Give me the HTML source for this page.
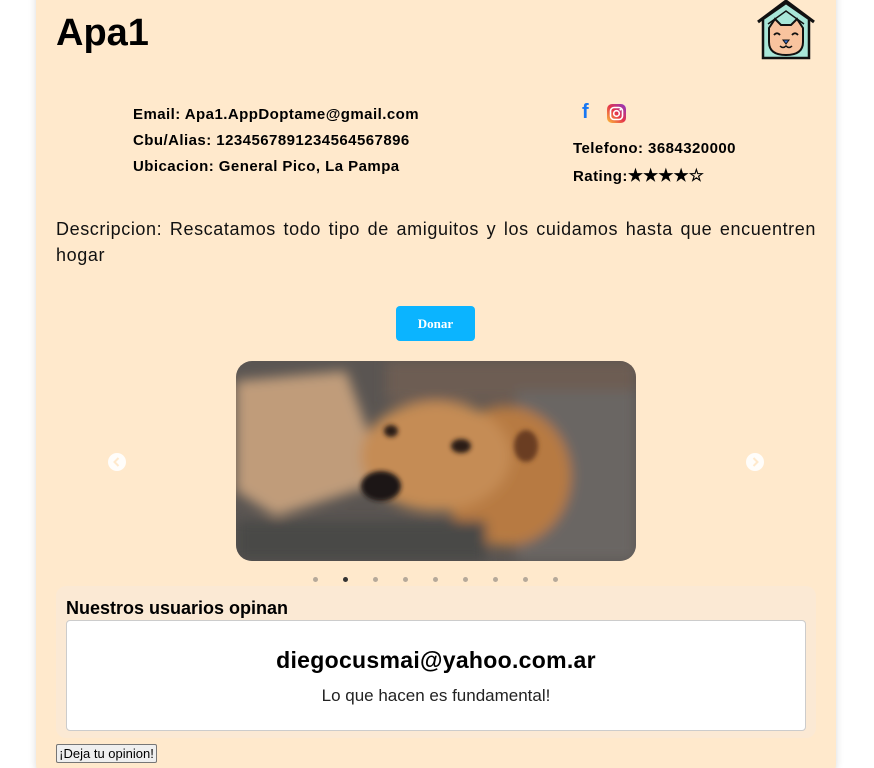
<!DOCTYPE html>
<html><head><meta charset="utf-8"><style>
*{box-sizing:border-box;margin:0;padding:0}
html,body{width:874px;height:768px;overflow:hidden}
body{background:#fff;font-family:"Liberation Sans",sans-serif;position:relative}
.card{position:absolute;left:36px;top:-20px;width:800px;height:800px;background:#ffe9cc;border-radius:16px;box-shadow:0 0 8px rgba(0,0,0,.15)}
.abs{position:absolute}
h1{position:absolute;left:56px;top:12px;font-size:38px;font-weight:bold;color:#000}
.info{position:absolute;font-weight:bold;font-size:15px;color:#000;letter-spacing:.45px}
.desc{position:absolute;left:56px;top:216px;width:760px;font-size:18px;line-height:26px;text-align:justify;color:#111;letter-spacing:.6px}
.btn{position:absolute;left:396px;top:306px;width:79px;height:35px;background:#0bb4ff;color:#fff;border-radius:4px;font-weight:bold;font-size:13px;text-align:center;line-height:35px;font-family:"Liberation Serif",serif}
.dot{position:absolute;top:577px;width:5px;height:5px;border-radius:50%;background:#b5a99a}
.arrow{position:absolute;top:453px;width:18px;height:18px}
</style></head><body>
<div class="card"></div>
<h1>Apa1</h1>
<svg class="abs" style="left:756px;top:0" width="60" height="60" viewBox="0 0 60 60">
<path d="M2 22 L30 1 L58 22" fill="none" stroke="#111" stroke-width="3"/>
<path d="M7 19 L30 3 L53 19 V58 H7 Z" fill="#a8e6d8" stroke="#111" stroke-width="2.5"/>
<path d="M12 24 L30 11 L48 24" fill="none" stroke="#111" stroke-width="1.5"/>
<path d="M13 28 L19 19 L25 25 H35 L41 19 L47 28 V42 Q47 55 30 55 Q13 55 13 42 Z" fill="#f8c39e" stroke="#111" stroke-width="2"/>
<path d="M18 35 q3-3.5 6 0 M36 35 q3-3.5 6 0" fill="none" stroke="#111" stroke-width="1.8"/>
<path d="M27 40 h6 l-3 4z" fill="#3a6fd0" stroke="#111" stroke-width="1"/>
<path d="M24 46 q3 3 6 0 q3 3 6 0" fill="none" stroke="#111" stroke-width="1.5"/>
</svg>
<div class="info" style="left:133px;top:106px">Email: Apa1.AppDoptame@gmail.com</div>
<div class="info" style="left:133px;top:132px">Cbu/Alias: 1234567891234564567896</div>
<div class="info" style="left:133px;top:158px">Ubicacion: General Pico, La Pampa</div>
<div class="abs" style="left:582px;top:101px;color:#1877f2;font-weight:bold;font-size:20px">f</div>
<svg class="abs" style="left:607px;top:104px" width="19" height="19" viewBox="0 0 19 19"><defs><linearGradient id="ig" x1="0" y1="1" x2="1" y2="0"><stop offset="0" stop-color="#fdc23a"/><stop offset=".5" stop-color="#e5364a"/><stop offset="1" stop-color="#8a35c9"/></linearGradient></defs><rect width="19" height="19" rx="5" fill="url(#ig)"/><rect x="3.5" y="3.5" width="12" height="12" rx="3.5" fill="none" stroke="#fff" stroke-width="1.6"/><circle cx="9.5" cy="9.5" r="2.8" fill="none" stroke="#fff" stroke-width="1.6"/><circle cx="13.3" cy="5.7" r=".9" fill="#fff"/></svg>
<div class="info" style="left:573px;top:140px">Telefono: 3684320000</div>
<div class="info" style="left:573px;top:166px">Rating:<span style="font-size:17px;letter-spacing:0">★★★★☆</span></div>
<div class="desc">Descripcion: Rescatamos todo tipo de amiguitos y los cuidamos hasta que encuentren hogar</div>
<div class="btn">Donar</div>
<svg class="abs" style="left:236px;top:361px" width="400" height="200" viewBox="0 0 400 200">
<defs><clipPath id="c"><rect width="400" height="200" rx="16"/></clipPath><filter id="b"><feGaussianBlur stdDeviation="6"/></filter><filter id="b2"><feGaussianBlur stdDeviation="2.5"/></filter></defs>
<g clip-path="url(#c)">
<rect width="400" height="200" fill="#5a5552"/>
<g filter="url(#b)">
<rect x="150" y="0" width="250" height="40" fill="#6d5d52"/>
<polygon points="0,20 110,10 150,120 40,155 0,130" fill="#c09c7a"/>
<rect x="280" y="30" width="120" height="170" fill="#6a6663"/>
<ellipse cx="270" cy="115" rx="65" ry="70" fill="#b77a42"/>
<ellipse cx="200" cy="95" rx="75" ry="55" fill="#c58c55"/>
<rect x="0" y="160" width="250" height="40" fill="#4a4846"/>
</g>
<g filter="url(#b2)">
<ellipse cx="145" cy="125" rx="20" ry="15" fill="#1a1412"/>
<ellipse cx="155" cy="70" rx="7" ry="6" fill="#2a1c14"/>
<ellipse cx="225" cy="85" rx="10" ry="7" fill="#2a1c14"/>
<ellipse cx="290" cy="85" rx="12" ry="16" fill="#6a3d20"/>
</g>
</g></svg>
<svg class="arrow" style="left:108px" viewBox="0 0 18 18"><circle cx="9" cy="9" r="9" fill="#fff" opacity=".9"/><path d="M10.5 5 L6.5 9 L10.5 13" fill="none" stroke="#ffe9cc" stroke-width="2"/></svg>
<svg class="arrow" style="left:746px" viewBox="0 0 18 18"><circle cx="9" cy="9" r="9" fill="#fff" opacity=".9"/><path d="M7.5 5 L11.5 9 L7.5 13" fill="none" stroke="#ffe9cc" stroke-width="2"/></svg>
<div class="dot" style="left:313px"></div>
<div class="dot" style="left:343px;background:#333"></div>
<div class="dot" style="left:373px"></div>
<div class="dot" style="left:403px"></div>
<div class="dot" style="left:433px"></div>
<div class="dot" style="left:463px"></div>
<div class="dot" style="left:493px"></div>
<div class="dot" style="left:523px"></div>
<div class="dot" style="left:553px"></div>
<div class="abs" style="left:56px;top:586px;width:760px;height:152px;background:#fbe9d4;border-radius:10px"></div>
<div class="abs" style="left:66px;top:598px;font-weight:bold;font-size:18px">Nuestros usuarios opinan</div>
<div class="abs" style="left:66px;top:620px;width:740px;height:111px;background:#fff;border:1px solid #ccc;border-radius:4px;text-align:center">
<div style="font-weight:bold;font-size:23px;margin-top:26px;letter-spacing:.3px">diegocusmai@yahoo.com.ar</div>
<div style="font-size:17px;margin-top:12px;color:#222">Lo que hacen es fundamental!</div>
</div>
<div class="abs" style="left:56px;top:744px;width:101px;height:19px;background:#efefef;border:1px solid #767676;border-radius:2px;font-size:13px;line-height:17px;text-align:center">¡Deja tu opinion!</div>
</body></html>
